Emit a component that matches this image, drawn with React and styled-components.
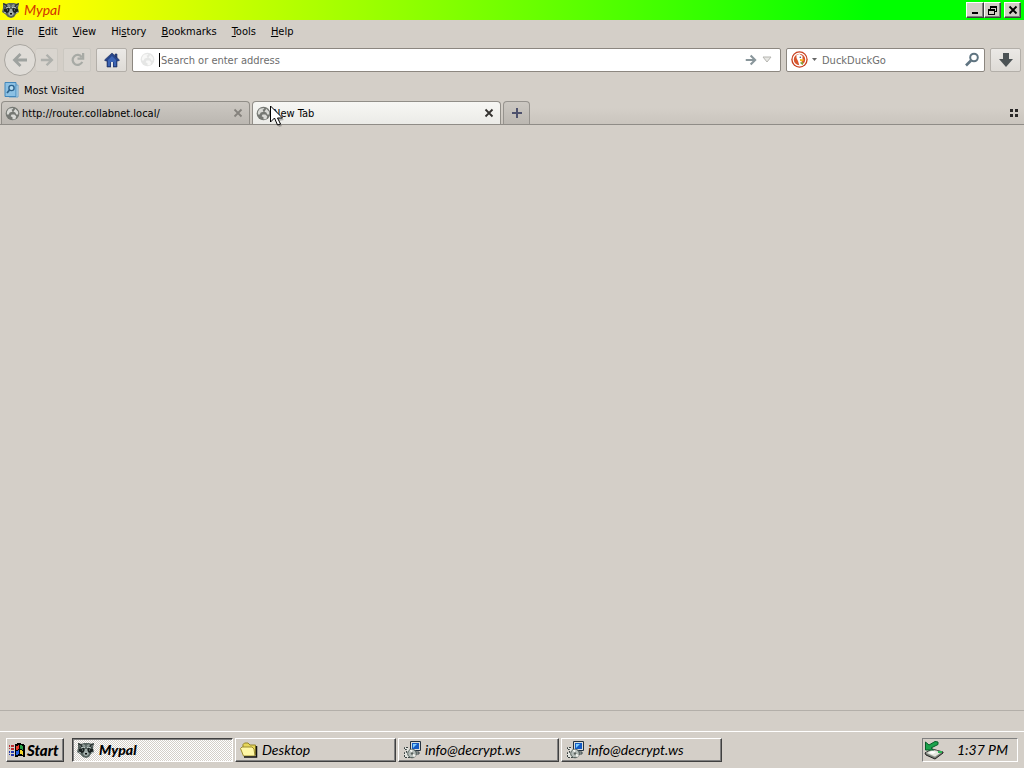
import React from "react";
import styled, { createGlobalStyle } from "styled-components";

const Global = createGlobalStyle`
  * { box-sizing: border-box; }
  body { margin: 0; background: #d4cfc8; }
  button, input { font: inherit; color: inherit; }
  button { padding: 0; margin: 0; border: 0; background: none; }
  svg { display: block; flex: none; }
`;

const UI = `"DejaVu Sans Condensed", "Liberation Sans", sans-serif`;

const Desktop = styled.div`
  min-height: 100vh;
  display: flex;
  flex-direction: column;
  background: #d4cfc8;
  color: #000;
  font: 11px/14px ${UI};
`;

const TitleBar = styled.header`
  height: 20px;
  display: flex;
  align-items: center;
  gap: 4px;
  padding: 0 3px 0 2px;
  background: linear-gradient(90deg, #ffff00 0%, #ffff00 5%, #00ff00 85%);
`;

const Title = styled.h1`
  flex: 1;
  margin: 0;
  color: #d23400;
  font: italic 14px/20px Lato, sans-serif;
`;

const WindowButtons = styled.div`
  display: flex;
`;

const WindowButton = styled.button`
  width: ${(p) => (p.$wide ? 18 : 17)}px;
  height: 16px;
  display: grid;
  place-items: center;
  margin-left: ${(p) => (p.$apart ? 3 : 0)}px;
  background: #d4cfc8;
  border: 1px solid;
  border-color: #fff #404040 #404040 #fff;
  box-shadow: inset -1px -1px #808080;
`;

const MenuBar = styled.nav`
  height: 23px;
  display: flex;
  align-items: center;
  gap: 15px;
  padding: 0 7px;
`;

const MenuItem = styled.button`
  u { text-underline-offset: 1px; }
`;

const NavBar = styled.div`
  height: 33px;
  display: flex;
  align-items: center;
  gap: 5px;
  padding: 0 3px 0 4px;
`;

const History = styled.div`
  display: flex;
  align-items: center;
`;

const BackButton = styled.button`
  width: 32px;
  height: 32px;
  display: grid;
  place-items: center;
  border: 1px solid #a9a6a0;
  border-radius: 50%;
  background: #dfdcd7;
`;

const ToolButton = styled.button`
  width: ${(p) => p.$width || 31}px;
  height: 24px;
  display: grid;
  place-items: center;
  border: 1px solid ${(p) => (p.$faint ? "#cbc8c1" : "#b3afa9")};
  border-left-width: ${(p) => (p.$joined ? 0 : 1)}px;
  border-radius: 2px;
  background: ${(p) => (p.$faint ? "#d9d5cf" : "linear-gradient(#ebe9e6, #dedbd6)")};
`;

const Field = styled.label`
  height: 24px;
  min-width: 0;
  display: flex;
  align-items: center;
  flex: ${(p) => (p.$fixed ? "0 0 199px" : "1")};
  gap: 4px;
  padding: 0 ${(p) => (p.$fixed ? 4 : 7)}px;
  background: #fff;
  border: 1px solid #8c8780;
  border-radius: 2px;
`;

const TextInput = styled.input`
  flex: 1;
  min-width: 0;
  height: 20px;
  padding: 2px 0 0 1px;
  border: 0;
  outline: 0;
  background: none;
  &::placeholder { color: #6d6d6d; opacity: 1; }
`;

const Caret = styled.span`
  width: 1px;
  height: 14px;
  margin-right: -4px;
  background: #000;
`;

const Bookmarks = styled.div`
  height: 25px;
  display: flex;
  align-items: center;
  padding: 2px 4px 0;
`;

const Bookmark = styled.button`
  display: flex;
  align-items: center;
  gap: 4px;
`;

const Label = styled.span`
  padding-top: 2px;
`;

const TabStrip = styled.div`
  height: 24px;
  display: flex;
  align-items: flex-end;
  gap: 2px;
  padding: 0 5px 0 1px;
  border-bottom: 1px solid #8f8c87;
  background: linear-gradient(#d4cfc8 30%, #cac5be);
`;

const Tab = styled.div`
  flex: 0 1 249px;
  min-width: 0;
  height: 23px;
  display: flex;
  align-items: center;
  gap: 2px;
  padding: 0 6px 0 3px;
  border: 1px solid #918e88;
  border-bottom: 0;
  border-radius: 4px 4px 0 0;
  background: ${(p) => (p.$active ? "linear-gradient(#f7f7f4, #ebebe7)" : "linear-gradient(#ccc8c2, #bbb7b1)")};
`;

const TabLabel = styled.button`
  flex: 1;
  min-width: 0;
  display: flex;
  align-items: center;
  gap: 2px;
  white-space: nowrap;
  overflow: hidden;
`;

const NewTab = styled.button`
  width: 27px;
  height: 23px;
  display: grid;
  place-items: center;
  border: 1px solid #96938e;
  border-bottom: 0;
  border-radius: 4px 4px 0 0;
  background: linear-gradient(#ccc8c2, #bbb7b1);
`;

const ListTabs = styled.button`
  align-self: center;
  margin-left: auto;
`;

const Page = styled.main`
  flex: 1;
`;

const StatusBar = styled.footer`
  height: 21px;
  border-top: 1px solid #b3afa9;
`;

const Taskbar = styled.nav`
  height: 37px;
  display: flex;
  align-items: center;
  padding: 0 6px;
  border-top: 1px solid #fff;
  font: italic 14px/18px Lato, sans-serif;
`;

const StartButton = styled.button`
  width: 58px;
  height: 24px;
  display: flex;
  align-items: center;
  gap: 2px;
  padding: 0 2px;
  margin-right: 8px;
  background: #d4cfc8;
  border: 1px solid;
  border-color: #fff #404040 #404040 #fff;
  box-shadow: inset -1px -1px #808080;
  font-weight: 900;
  font-size: 15px;
`;

const Tasks = styled.div`
  flex: 1;
  min-width: 0;
  display: flex;
  gap: 2px;
`;

const Task = styled.button`
  flex: 0 1 161px;
  min-width: 0;
  height: 24px;
  display: flex;
  align-items: center;
  gap: 4px;
  padding: 0 4px;
  white-space: nowrap;
  border: 1px solid;
  border-color: ${(p) => (p.$pressed ? "#404040 #fff #fff #404040" : "#fff #404040 #404040 #fff")};
  box-shadow: ${(p) => (p.$pressed ? "inset 1px 1px #808080" : "inset -1px -1px #808080")};
  background: ${(p) => (p.$pressed ? "repeating-conic-gradient(#fff 0 25%, #d4cfc8 0 50%) 0 0 / 2px 2px" : "#d4cfc8")};
  font-weight: ${(p) => (p.$pressed ? 900 : 400)};
`;

const Tray = styled.div`
  width: 96px;
  height: 24px;
  display: flex;
  align-items: center;
  gap: 13px;
  padding: 0 1px;
  border: 1px solid;
  border-color: #808080 #fff #fff #808080;
`;

const Pointer = styled.svg`
  position: absolute;
  left: 269px;
  top: 105px;
  pointer-events: none;
`;

const Raccoon = ({ size = 18 }) => (
  <svg width={size} height={size} viewBox="0 0 18 18" aria-hidden="true">
    <path d="M1 2l3 1 3-1h5l3 1 2-1-1 5 1 4-3 2-2 3-3 1-3-1-3-3-3-2 1-4z" fill="#57635f" />
    <path d="M1 2l3 1 2 2-3 2zM17 2l-3 1-2 2 3 2z" fill="#2a3331" />
    <path d="M2 4l2 1-1 1zM16 4l-2 1 1 1z" fill="#a3afab" />
    <path d="M6 3l2 1 1 3 1-3 2-1 1 2-3 1H8L5 5z" fill="#8d9995" />
    <path d="M2 8l5-1 1 3-3 2-3-1zM16 8l-5-1-1 3 3 2 3-1z" fill="#19201f" />
    <path d="M4 7l3-1 1 1M14 7l-3-1-1 1M2 11l2 1M16 11l-2 1" fill="none" stroke="#bdc8c4" />
    <path d="M8 8h2l1 3 1 2-2 2H8l-2-2 1-2z" fill="#a2aeaa" />
    <path d="M8 12h2v1L9 14l-1-1z" fill="#090c0c" />
    <path d="M5 9h1M12 9h1" stroke="#8fa09a" />
  </svg>
);

const Globe = ({ faint }) => (
  <svg width="15" height="15" viewBox="0 0 16 16" opacity={faint ? 0.18 : 1} aria-hidden="true">
    <circle cx="8" cy="8" r="7.3" fill="#757873" />
    <path d="M2 6l2-3 4-1 1 1-2 1 1 2-3 1-1 2-2 0zM11 3l3 3 0 3-2 0-1-2-2-1zM7 9l3 0 2 2-1 3-3 0 0-2-2-1z" fill="#d9dad6" />
  </svg>
);

const Arrow = ({ size = 16, flip, color = "#9ea29f" }) => (
  <svg width={size} height={size} viewBox="0 0 16 16" fill="none" stroke={color} strokeWidth="2.8" aria-hidden="true">
    <path d={flip ? "M15 8H3M8.5 2l-6 6 6 6" : "M1 8h12M7.5 2l6 6-6 6"} />
  </svg>
);

const Reload = () => (
  <svg width="15" height="15" viewBox="0 0 16 16" fill="none" stroke="#a7aaa5" strokeWidth="2.4" aria-hidden="true">
    <path d="M12.5 5.5a5.3 5.3 0 1 0 .5 5M14 1v6H8" />
  </svg>
);

const Home = () => (
  <svg width="16" height="16" viewBox="0 0 16 16" aria-hidden="true">
    <path d="M8 1l7.5 7-1 1H13v6H9v-4H7v4H3V9H1.500l-1-1zM11 2h2v4l-2-2z" fill="#27458b" stroke="#24345e" strokeWidth=".6" />
    <path d="M4 8l4-4 4 4v6h-2v-4H6v4H4z" fill="#3c64b4" />
    <path d="M7 10h2v5H7z" fill="#e3e5e7" />
  </svg>
);

const Magnifier = () => (
  <svg width="16" height="16" viewBox="0 0 16 16" fill="none" stroke="#5f7481" aria-hidden="true">
    <circle cx="10" cy="5.500" r="3.8" strokeWidth="2" />
    <path d="M7 8.500L2 13.500" strokeWidth="2.6" />
  </svg>
);

const Duck = () => (
  <svg width="17" height="17" viewBox="0 0 17 17" aria-hidden="true">
    <circle cx="8.5" cy="8.5" r="8.2" fill="#c8401f" />
    <circle cx="8.5" cy="8.5" r="6.3" fill="#d8562e" stroke="#fff" strokeWidth="1.2" />
    <path d="M5.500 4l3-1 3 2v4l-1 2 1 3.500-3 .5L7 10 5.500 7z" fill="#fff" />
    <path d="M9 8l4 .5-1 1.800-3-.2z" fill="#f6b51c" />
    <path d="M9 11.500l3-.5v3l-2-1z" fill="#7fa83a" />
    <circle cx="9.300" cy="6.200" r=".8" fill="#34506c" />
  </svg>
);

const MostVisited = () => (
  <svg width="16" height="16" viewBox="0 0 16 16" aria-hidden="true">
    <path d="M5 3h9v12H5z" fill="#c4e0f0" stroke="#6ba3cb" />
    <path d="M1 .5h11v14H1z" fill="#8cc1e4" stroke="#4287ba" />
    <circle cx="7.500" cy="6" r="2.600" fill="#b8ddf1" stroke="#2c628c" strokeWidth="1.400" />
    <path d="M5.500 8L3 11" stroke="#2c628c" strokeWidth="1.800" />
  </svg>
);

const Cross = ({ color = "#85827d" }) => (
  <svg width="10" height="10" viewBox="0 0 10 10" stroke={color} strokeWidth="1.800" aria-hidden="true"><path d="M1.500 1.500l7 7M8.500 1.500l-7 7" /></svg>
);

const Flag = () => (
  <svg width="16" height="16" viewBox="0 0 16 16" shapeRendering="crispEdges" aria-hidden="true">
    <path d="M6 2l4-1 6 2v12l-4-1-6 1z" fill="#000" />
    <path d="M7 4l3-1v4l-3 1z" fill="#e13a29" /><path d="M11 3l3 1v4l-3-1z" fill="#25a044" />
    <path d="M7 9l3-1v4l-3 1z" fill="#235ee0" /><path d="M11 8l3 1v4l-3-1z" fill="#f5d52c" />
    <path d="M0 3h1v2H0zM2 3h3v2H2zM0 6h1v1H0zM2 6h3v2H2z" fill="#bd2c31" />
    <path d="M0 9h1v2H0zM2 9h3v2H2zM0 12h1v1H0zM2 12h3v2H2z" fill="#2237b0" />
  </svg>
);

const Folder = () => (
  <svg width="18" height="16" viewBox="0 0 18 16" aria-hidden="true">
    <path d="M3 10V2.500L4.500 1H8l2 2h5.500v10" fill="#e6d65a" stroke="#94852a" />
    <path d="M.5 6.500L2 5h10l2 2 1 7H3.500z" fill="#fff7a6" stroke="#9c8d31" />
    <path d="M4 15h12.500V4" fill="none" stroke="#111" strokeWidth="1.500" />
  </svg>
);

const Installer = () => (
  <svg width="18" height="18" viewBox="0 0 18 18" aria-hidden="true">
    <path d="M7.500.5h10v9h-10z" fill="#d9dddb" stroke="#26333f" />
    <path d="M9 2h7v6H9z" fill="#145bc4" /><path d="M10 3h4l-4 4z" fill="#80d0ff" />
    <path d="M11 11h5v2h-5z" fill="#c8ccc9" stroke="#394446" />
    <path d="M5 6.500H1.500v2h2v3h-2v5H9" fill="#e4e6e1" stroke="#3c4543" strokeDasharray="2 1" />
    <circle cx="9" cy="12.500" r="4.300" fill="#b5bdb9" stroke="#4d5955" />
    <path d="M9 12.500L6.500 9l3-.5zM9 12.500l4 1.500-2 2.500z" fill="#f2f3ee" />
    <circle cx="9" cy="12.500" r="1.200" fill="#59615d" />
  </svg>
);

const SafelyRemove = () => (
  <svg width="20" height="20" viewBox="0 0 20 20" aria-hidden="true">
    <path d="M1 13l7-4 11 3v1l-8 6-9-4z" fill="#777d74" stroke="#222" />
    <path d="M2 13l6-3.500 10 2.500-7 5z" fill="#e4e7dd" stroke="#8c918a" strokeWidth=".6" />
    <path d="M5 13l3-2 4 1-3 2z" fill="#fff" />
    <path d="M1.500 2v8h8L7 8l7-3.500V2l-3-.5L5 5z" fill="#1ba34c" stroke="#075d29" />
    <path d="M14 12h4" stroke="#2bb452" strokeWidth="2" />
  </svg>
);

const menus = [["", "F", "ile"], ["", "E", "dit"], ["", "V", "iew"], ["Hi", "s", "tory"], ["", "B", "ookmarks"], ["", "T", "ools"], ["", "H", "elp"]];

export default function App() {
  return (
    <Desktop>
      <Global />
      <TitleBar>
        <Raccoon />
        <Title>Mypal</Title>
        <WindowButtons>
          <WindowButton $wide aria-label="Minimize"><svg width="10" height="10"><path d="M2 7h6v2H2z" /></svg></WindowButton>
          <WindowButton aria-label="Restore"><svg width="11" height="11" fill="none" stroke="#000" shapeRendering="crispEdges"><path d="M3.5 4V1.5h6v5H8M3 2h7M1.5 4.5h6v5h-6zM1 5h7" /></svg></WindowButton>
          <WindowButton $apart aria-label="Close"><Cross color="#000" /></WindowButton>
        </WindowButtons>
      </TitleBar>
      <MenuBar>
        {menus.map(([before, key, after]) => <MenuItem key={after}>{before}<u>{key}</u>{after}</MenuItem>)}
      </MenuBar>
      <NavBar>
        <History>
          <BackButton aria-label="Back"><Arrow flip /></BackButton>
          <ToolButton $faint $joined $width={22} aria-label="Forward"><Arrow size={14} color="#aeb0ac" /></ToolButton>
        </History>
        <ToolButton $faint $width={28} aria-label="Reload"><Reload /></ToolButton>
        <ToolButton aria-label="Home"><Home /></ToolButton>
        <Field>
          <Globe faint />
          <Caret />
          <TextInput aria-label="Address" placeholder="Search or enter address" />
          <Arrow size={12} color="#89969b" />
          <svg width="12" height="8" viewBox="0 0 12 8"><path d="M2 1h8L6 6z" fill="#e8e8e5" stroke="#b6b6b2" /></svg>
        </Field>
        <Field $fixed>
          <Duck />
          <svg width="5" height="4"><path d="M0 0h5L2.5 3z" fill="#666" /></svg>
          <TextInput aria-label="Search" placeholder="DuckDuckGo" />
          <Magnifier />
        </Field>
        <ToolButton aria-label="Downloads"><svg width="16" height="16" viewBox="0 0 16 16"><path d="M5 1h6v6h4l-7 8-7-8h4z" fill="#4c5355" /></svg></ToolButton>
      </NavBar>
      <Bookmarks><Bookmark><MostVisited /><Label>Most Visited</Label></Bookmark></Bookmarks>
      <TabStrip>
        <Tab><TabLabel><Globe /><Label>http://router.collabnet.local/</Label></TabLabel><button aria-label="Close tab"><Cross /></button></Tab>
        <Tab $active><TabLabel><Globe /><Label>New Tab</Label></TabLabel><button aria-label="Close tab"><Cross color="#34322f" /></button></Tab>
        <NewTab aria-label="Open a new tab"><svg width="10" height="10" stroke="#4e526d" strokeWidth="2"><path d="M0 5h10M5 0v10" /></svg></NewTab>
        <ListTabs aria-label="List all tabs"><svg width="10" height="10" fill="#292827"><path d="M1 1h3v3H1zM6 1h3v3H6zM1 6h3v3H1zM6 6h3v3H6z" /></svg></ListTabs>
      </TabStrip>
      <Page />
      <StatusBar />
      <Taskbar>
        <StartButton><Flag />Start</StartButton>
        <Tasks>
          <Task $pressed><Raccoon />Mypal</Task>
          <Task><Folder />Desktop</Task>
          <Task><Installer />info@decrypt.ws</Task>
          <Task><Installer />info@decrypt.ws</Task>
        </Tasks>
        <Tray><SafelyRemove /><time>1:37 PM</time></Tray>
      </Taskbar>
      <Pointer width="18" height="22" viewBox="0 0 18 22" aria-hidden="true">
        <path d="M4 4l11 11-5 1 3 5-3 1-3-5z" fill="#000" opacity=".25" />
        <path d="M1.5 1v16l4-4 3 7 3-1-3-6h5z" fill="#fff" stroke="#000" />
      </Pointer>
    </Desktop>
  );
}
